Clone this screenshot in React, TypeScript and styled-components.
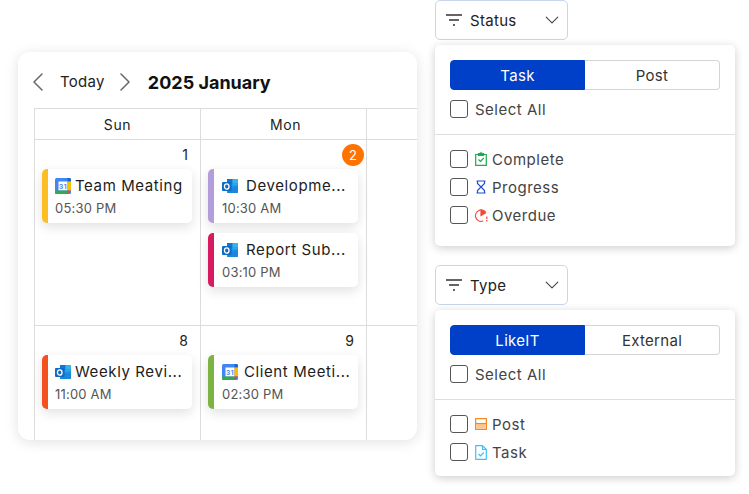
import * as React from 'react';
import styled, {createGlobalStyle} from "styled-components";

const GlobalStyle = createGlobalStyle`
    * {
        box-sizing: border-box;
    }

    body {
        margin: 0;
        background: #fff;
        font-family: "Inter", "Liberation Sans", sans-serif;
        color: #222;
    }
`

const GoogleIcon = () => (
    <svg width="16" height="16" viewBox="0 0 16 16">
        <rect x="0" y="0" width="16" height="16" rx="1.5" fill="#4285f4"/>
        <rect x="3.5" y="3.5" width="9" height="9" fill="#fff"/>
        <path d="M12.5 0H14.5Q16 0 16 1.5V3.500H12.500Z" fill="#1967d2"/>
        <path d="M12.5 3.5H16V12.500H12.500Z" fill="#fbbc04"/>
        <path d="M0 12.500H12.500V16H1.500Q0 16 0 14.500Z" fill="#34a853"/>
        <path d="M12.500 12.500H16L12.500 16Z" fill="#ea4335"/>
        <text x="8" y="11" textAnchor="middle" fontSize="6.500" fontWeight="700" fill="#4285f4" fontFamily="Inter, sans-serif">31</text>
    </svg>
)

const OutlookIcon = () => (
    <svg width="16" height="16" viewBox="0 0 16 16">
        <rect x="5" y="1" width="11" height="14" rx="1" fill="#1490df"/>
        <rect x="5" y="1" width="5.500" height="4.500" fill="#0f78d4"/>
        <rect x="10.500" y="1" width="5.500" height="4.500" fill="#3bb1ec"/>
        <rect x="10.500" y="5.500" width="5.500" height="4.500" fill="#28a8ea"/>
        <path d="M5 10L16 7V14Q16 15 15 15H6Q5 15 5 14Z" fill="#1a86dc" opacity="0.85"/>
        <rect x="0" y="4" width="9.500" height="9" rx="1" fill="#0f6cc4"/>
        <ellipse cx="4.750" cy="8.500" rx="2.300" ry="2.700" fill="none" stroke="#fff" strokeWidth="1.300"/>
    </svg>
)

const FilterIcon = () => (
    <svg width="18" height="14" viewBox="0 0 18 14" fill="none" stroke="#333" strokeWidth="1.500">
        <path d="M1 2H17M4 7H14M8 12H10"/>
    </svg>
)

const Chevron = ({dir, size, color}: {dir: "left" | "right" | "down", size: number, color: string}) => {
    const paths = {
        left: "M14 3L6 11L14 19",
        right: "M8 3L16 11L8 19",
        down: "M3 7L11 15L19 7",
    }
    return (
        <svg width={size} height={size} viewBox="0 0 22 22" fill="none" stroke={color} strokeWidth="1.500" strokeLinecap="round" strokeLinejoin="round">
            <path d={paths[dir]}/>
        </svg>
    )
}

const CompleteIcon = () => (
    <svg width="12" height="14" viewBox="0 0 12 14" fill="none" stroke="#1fa855" strokeWidth="1.200">
        <path d="M3.500 2.500H.7V13.300H11.300V2.500H8.500"/>
        <path d="M3.500 3.500V1.500H5L6 .8L7 1.500H8.500V3.500Z" fill="#1fa855"/>
        <path d="M3.500 7.500L5.500 9.500L8.800 6"/>
    </svg>
)

const ProgressIcon = () => (
    <svg width="12" height="14" viewBox="0 0 12 14" fill="none" stroke="#1d4fd1" strokeWidth="1.200">
        <path d="M1.500 1H10.500M1.500 13H10.500"/>
        <path d="M2.500 1V3.500L6 7L2.500 10.500V13M9.500 1V3.500L6 7L9.500 10.500V13"/>
    </svg>
)

const OverdueIcon = () => (
    <svg width="13" height="14" viewBox="0 0 13 14" fill="none" stroke="#f0483e" strokeWidth="1.200">
        <path d="M11 4.500A5.700 5.700 0 1 0 8.200 13"/>
        <path d="M6 7.500V2.300A5.200 5.200 0 0 1 10.300 5Z" fill="#f0483e"/>
        <path d="M11.800 8.500V11M11.800 12V13.500"/>
    </svg>
)

const PostIcon = () => (
    <svg width="12" height="12" viewBox="0 0 12 12" fill="none">
        <rect x=".6" y=".6" width="10.800" height="10.800" fill="#fff" stroke="#f6891f" strokeWidth="1.200"/>
        <rect x="1.200" y="6" width="9.600" height="4.800" fill="#fbc68f"/>
        <path d="M1 5.500H11" stroke="#f6891f" strokeWidth="1.200"/>
    </svg>
)

const TaskIcon = () => (
    <svg width="12" height="15" viewBox="0 0 12 15" fill="none" stroke="#3fc0f5" strokeWidth="1.200">
        <path d="M.7 .7H7.500L11.300 4.500V14.300H.7Z" strokeLinejoin="round"/>
        <path d="M7.500 .7V4.500H11.300"/>
        <path d="M3.500 9L5.500 10.800L8.800 7.500"/>
    </svg>
)

type EventData = {
    title: string
    time: string
    color: string
    source: "google" | "outlook"
    gap: number
}

const days: {date: number, badge?: boolean, events: EventData[]}[] = [
    {date: 1, events: [{title: "Team Meating", time: "05:30 PM", color: "#fbbf24", source: "google", gap: 4}]},
    {
        date: 2,
        badge: true,
        events: [
            {title: "Developme...", time: "10:30 AM", color: "#b39ddb", source: "outlook", gap: 8},
            {title: "Report Sub...", time: "03:10 PM", color: "#d81b60", source: "outlook", gap: 8},
        ],
    },
    {date: 3, events: []},
    {date: 8, events: [{title: "Weekly Revi...", time: "11:00 AM", color: "#f4511e", source: "outlook", gap: 4}]},
    {date: 9, events: [{title: "Client Meeti...", time: "02:30 PM", color: "#7cb342", source: "google", gap: 6}]},
    {date: 10, events: []},
]

const FilterPanel = ({label, tabs, items, bottom}: {
    label: string
    tabs: string[]
    items: {name: string, icon: React.ReactNode}[]
    bottom: number
}) => (
    <div>
        <SelectBox>
            <FilterIcon/>
            <SelectLabel>{label}</SelectLabel>
            <Chevron dir="down" size={16} color="#444"/>
        </SelectBox>
        <Panel>
            <PanelTop>
                <Tabs>
                    <Tab $active>{tabs[0]}</Tab>
                    <Tab>{tabs[1]}</Tab>
                </Tabs>
                <CheckRow>
                    <CheckBox/>
                    <CheckText>Select All</CheckText>
                </CheckRow>
            </PanelTop>
            <PanelList $bottom={bottom}>
                {items.map(item => (
                    <CheckRow key={item.name}>
                        <CheckBox/>
                        <IconSlot>{item.icon}</IconSlot>
                        <CheckText>{item.name}</CheckText>
                    </CheckRow>
                ))}
            </PanelList>
        </Panel>
    </div>
)

export default function App() {
    return (
        <Page>
            <GlobalStyle/>
            <CalendarCard>
                <CalendarHead>
                    <Chevron dir="left" size={22} color="#666"/>
                    <TodayLabel>Today</TodayLabel>
                    <Chevron dir="right" size={22} color="#666"/>
                    <MonthTitle>2025 January</MonthTitle>
                </CalendarHead>
                <Grid>
                    <DayHead>Sun</DayHead>
                    <DayHead>Mon</DayHead>
                    <DayHead/>
                    {days.map((day, i) => (
                        <Cell key={day.date} $tall={i < 3}>
                            {day.events.length > 0 && (
                                <DateRow>{day.badge ? <Badge>{day.date}</Badge> : day.date}</DateRow>
                            )}
                            {day.events.map(event => (
                                <EventCard key={event.title} $color={event.color}>
                                    <EventTitle $gap={event.gap}>
                                        {event.source === "google" ? <GoogleIcon/> : <OutlookIcon/>}
                                        <span>{event.title}</span>
                                    </EventTitle>
                                    <EventTime>{event.time}</EventTime>
                                </EventCard>
                            ))}
                        </Cell>
                    ))}
                </Grid>
            </CalendarCard>
            <Filters>
                <FilterPanel
                    label="Status"
                    tabs={["Task", "Post"]}
                    bottom={22}
                    items={[
                        {name: "Complete", icon: <CompleteIcon/>},
                        {name: "Progress", icon: <ProgressIcon/>},
                        {name: "Overdue", icon: <OverdueIcon/>},
                    ]}
                />
                <FilterPanel
                    label="Type"
                    tabs={["LikeIT", "External"]}
                    bottom={15}
                    items={[
                        {name: "Post", icon: <PostIcon/>},
                        {name: "Task", icon: <TaskIcon/>},
                    ]}
                />
            </Filters>
        </Page>
    );
};

const Page = styled.div`
    display: flex;
    align-items: flex-start;
    gap: 18px;
    width: 749px;
    height: 494px;
    padding-left: 18px;
    overflow: hidden;
`

const CalendarCard = styled.section`
    width: 399px;
    height: 388px;
    margin-top: 52px;
    padding-left: 16px;
    background: #fff;
    border-radius: 12px;
    box-shadow: 0 2px 14px rgba(0, 0, 0, 0.12);
    overflow: hidden;
`

const CalendarHead = styled.div`
    display: flex;
    align-items: center;
    height: 56px;
    padding-top: 3px;
    margin-left: -6px;
`

const TodayLabel = styled.span`
    font-size: 15px;
    letter-spacing: 0.3px;
    margin: 0 8px 0 10px;
`

const MonthTitle = styled.h1`
    margin: 2px 0 0 13px;
    font-size: 18px;
    font-weight: 700;
    color: #111;
`

const Grid = styled.div`
    display: grid;
    grid-template-columns: 166px 166px 51px;
    border-top: 1px solid #dcdcdc;
    border-left: 1px solid #dcdcdc;
`

const DayHead = styled.div`
    height: 31px;
    display: flex;
    align-items: center;
    justify-content: center;
    font-size: 14px;
    letter-spacing: 0.6px;
    border-right: 1px solid #dcdcdc;
    border-bottom: 1px solid #dcdcdc;

    &:nth-child(2) {
        padding-left: 4px;
    }

    &:nth-child(3) {
        border-right: none;
    }
`

const DateRow = styled.div`
    height: 29px;
    display: flex;
    align-items: center;
    justify-content: flex-end;
    padding-right: 3px;
    font-size: 14px;
`

const Badge = styled.span`
    width: 22px;
    height: 22px;
    margin-right: -10px;
    display: flex;
    align-items: center;
    justify-content: center;
    border-radius: 50%;
    background: #ff7300;
    color: #fff;
    font-size: 13px;
`

const EventCard = styled.div<{$color: string}>`
    width: 150px;
    height: 54px;
    margin-bottom: 10px;
    padding: 7px 6px 0 7px;
    background: #fff;
    border-left: 6px solid ${props => props.$color};
    border-radius: 5px;
    box-shadow: 0 4px 12px rgba(0, 0, 0, 0.12);
`

const Cell = styled.div<{$tall: boolean}>`
    height: 186px;
    padding: 0 9px 0 7px;
    border-right: 1px solid #dcdcdc;
    border-bottom: ${props => props.$tall ? "1px solid #dcdcdc" : "none"};

    &:nth-child(3n) {
        border-right: none;
    }

    &:nth-child(3n + 2) ${EventCard} {
        padding-left: 8px;
    }
`

const EventTitle = styled.div<{$gap: number}>`
    display: flex;
    align-items: center;
    gap: ${props => props.$gap}px;
    font-size: 15px;
    letter-spacing: 0.6px;
    color: #1c1c1c;
    white-space: nowrap;

    svg {
        flex: none;
    }
`

const EventTime = styled.div`
    margin-top: 5px;
    font-size: 13px;
    letter-spacing: 0.2px;
    color: #555;
`

const Filters = styled.div`
    display: flex;
    flex-direction: column;
    gap: 19px;
    width: 300px;
`

const SelectBox = styled.div`
    width: 133px;
    height: 40px;
    display: flex;
    align-items: center;
    padding: 0 7px 0 9px;
    background: #fff;
    border: 1px solid #c9d6ea;
    border-radius: 5px;
`

const SelectLabel = styled.span`
    flex: 1;
    margin-left: 7px;
    font-size: 15px;
    letter-spacing: 0.3px;
`

const Panel = styled.div`
    margin-top: 5px;
    background: #fff;
    border-radius: 5px;
    box-shadow: 0 2px 10px rgba(0, 0, 0, 0.2);
`

const PanelTop = styled.div`
    display: flex;
    flex-direction: column;
    gap: 10px;
    padding: 15px 15px 16px;
    border-bottom: 1px solid #dedede;
`

const Tabs = styled.div`
    display: flex;
    height: 30px;
`

const Tab = styled.div<{$active?: boolean}>`
    flex: ${props => props.$active ? "0 0 135px" : "1"};
    display: flex;
    align-items: center;
    justify-content: center;
    font-size: 15px;
    letter-spacing: 0.3px;
    color: ${props => props.$active ? "#fff" : "#333"};
    background: ${props => props.$active ? "#0040c8" : "#fff"};
    border: 1px solid ${props => props.$active ? "#0040c8" : "#d5d5d5"};
    border-radius: ${props => props.$active ? "4px 0 0 4px" : "0 4px 4px 0"};
    border-left-width: ${props => props.$active ? "1px" : "0"};
`

const PanelList = styled.div<{$bottom: number}>`
    display: flex;
    flex-direction: column;
    gap: 10px;
    padding: 15px 15px ${props => props.$bottom}px;
`

const CheckRow = styled.label`
    display: flex;
    align-items: center;
    height: 18px;
`

const CheckBox = styled.span`
    width: 18px;
    height: 18px;
    flex: none;
    background: #fff;
    border: 1px solid #555;
    border-radius: 3px;
`

const IconSlot = styled.span`
    display: flex;
    width: 17px;
    margin-left: 7px;
`

const CheckText = styled.span`
    margin-left: 7px;
    font-size: 15px;
    letter-spacing: 0.5px;
    color: #444;

    ${IconSlot} + & {
        margin-left: 0;
    }
`
